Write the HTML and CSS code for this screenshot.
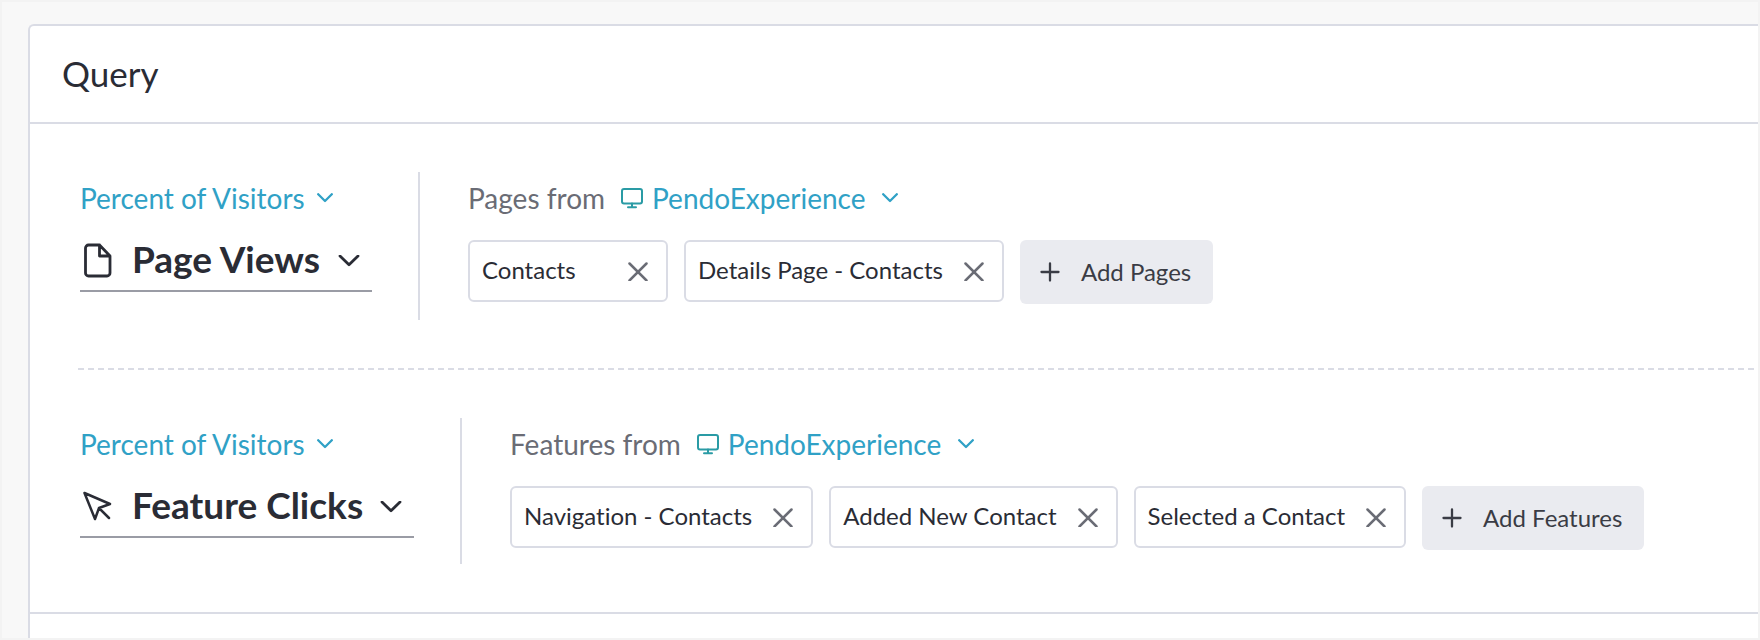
FILE: index.html
```html
<!DOCTYPE html>
<html lang="en">
<head>
<meta charset="utf-8">
<title>Query</title>
<link rel="stylesheet" href="styles.css">
</head>
<body>
<svg class="sprite" aria-hidden="true">
  <symbol id="chevron" viewBox="0 0 16 10"><path stroke-width="2.3" d="M1.200 1.200 8 8 14.800 1.200"/></symbol>
  <symbol id="chevron-lg" viewBox="0 0 22 13"><path stroke-width="2.800" d="M2 1 11 9.800 20 1"/></symbol>
  <symbol id="monitor" viewBox="0 0 22 21"><rect x="1" y="1" width="20" height="14.500" rx="2"/><path d="M11 15.500V19M7 19.300h8"/></symbol>
  <symbol id="page" viewBox="0 0 32 36"><path stroke-width="2.800" d="M19.500 2H8.500a3 3 0 0 0-3 3v25a3 3 0 0 0 3 3h18.500a3 3 0 0 0 3-3V13ZM19.500 2v11h10.500"/></symbol>
  <symbol id="cursor" viewBox="0 0 32 36"><path stroke-width="2.500" d="M4.500 4 30 15 19 19 15 30ZM19 19 29 29"/></symbol>
  <symbol id="close" viewBox="0 0 20 20"><path stroke-width="2.500" d="M1.500 2.500 18.500 19.500M18.500 2.500 1.500 19.500"/></symbol>
  <symbol id="plus" viewBox="0 0 20 20"><path stroke-width="2.300" d="M10 1.500v17M1.500 10h17"/></symbol>
</svg>
<main class="card">
  <header class="card-header"><h1 class="title">Query</h1></header>
  <section class="card-body">
    <div class="row">
      <div class="metric">
        <div class="picker">
          <select class="select select-measure" aria-label="Measure"><option>Percent of Visitors</option></select>
          <svg class="chevron"><use href="#chevron"/></svg>
        </div>
        <div class="event">
          <svg class="event-icon"><use href="#page"/></svg>
          <div class="picker picker-lg">
            <select class="select select-lg" aria-label="Event type"><option>Page Views</option></select>
            <svg class="chevron chevron-lg"><use href="#chevron-lg"/></svg>
          </div>
        </div>
      </div>
      <div class="source">
        <div class="source-line">
          <label for="pages-app">Pages from</label>
          <svg class="monitor"><use href="#monitor"/></svg>
          <div class="picker">
            <select class="select" id="pages-app"><option>PendoExperience</option></select>
            <svg class="chevron"><use href="#chevron"/></svg>
          </div>
        </div>
        <div class="chips">
          <div class="chip"><span class="chip-text">Contacts</span><button class="remove" aria-label="Remove Contacts"><svg class="glyph"><use href="#close"/></svg></button></div>
          <div class="chip"><span class="chip-text">Details Page - Contacts</span><button class="remove" aria-label="Remove Details Page - Contacts"><svg class="glyph"><use href="#close"/></svg></button></div>
          <button class="add"><svg class="glyph"><use href="#plus"/></svg><span class="add-text">Add Pages</span></button>
        </div>
      </div>
    </div>
    <hr class="divider">
    <div class="row">
      <div class="metric">
        <div class="picker">
          <select class="select select-measure" aria-label="Measure"><option>Percent of Visitors</option></select>
          <svg class="chevron"><use href="#chevron"/></svg>
        </div>
        <div class="event">
          <svg class="event-icon"><use href="#cursor"/></svg>
          <div class="picker picker-lg">
            <select class="select select-lg" aria-label="Event type"><option>Feature Clicks</option></select>
            <svg class="chevron chevron-lg"><use href="#chevron-lg"/></svg>
          </div>
        </div>
      </div>
      <div class="source">
        <div class="source-line">
          <label for="features-app">Features from</label>
          <svg class="monitor"><use href="#monitor"/></svg>
          <div class="picker">
            <select class="select" id="features-app"><option>PendoExperience</option></select>
            <svg class="chevron"><use href="#chevron"/></svg>
          </div>
        </div>
        <div class="chips">
          <div class="chip"><span class="chip-text">Navigation - Contacts</span><button class="remove" aria-label="Remove Navigation - Contacts"><svg class="glyph"><use href="#close"/></svg></button></div>
          <div class="chip"><span class="chip-text">Added New Contact</span><button class="remove" aria-label="Remove Added New Contact"><svg class="glyph"><use href="#close"/></svg></button></div>
          <div class="chip"><span class="chip-text">Selected a Contact</span><button class="remove" aria-label="Remove Selected a Contact"><svg class="glyph"><use href="#close"/></svg></button></div>
          <button class="add"><svg class="glyph"><use href="#plus"/></svg><span class="add-text">Add Features</span></button>
        </div>
      </div>
    </div>
  </section>
</main>
</body>
</html>
```
FILE: styles.css
```css
* { box-sizing: border-box; }

body {
  margin: 0;
  min-height: 100vh;
  display: flex;
  border: 2px solid #f3f3f3;
  background: #f8f8f8;
  color: #2a2c35;
  font-family: Lato, sans-serif;
  font-size: 24px;
  font-variant-ligatures: none;
}

button, select {
  font: inherit;
  font-variant-ligatures: none;
}

svg {
  flex: none;
  fill: none;
  stroke: currentColor;
  stroke-width: 2px;
  stroke-linecap: round;
  stroke-linejoin: round;
}

.sprite { display: none; }

.card {
  flex: 1;
  margin: 22px 0 0 26px;
  border: solid #dadce5;
  border-width: 2px 0 0 2px;
  border-top-left-radius: 6px;
  background: #fff;
}

.card-header {
  padding: 25px 32px 27px;
  border-bottom: 2px solid #dadce5;
}

.title {
  margin: 0;
  font-size: 35px;
  font-weight: 400;
  line-height: 44px;
}

.card-body {
  padding: 48px 0 48px 48px;
  border-bottom: 2px solid #dadce5;
}

.row {
  display: flex;
  padding-left: 2px;
}

.metric {
  display: flex;
  flex-direction: column;
  align-items: flex-start;
  gap: 18px;
  padding: 10px 46px 28px 0;
  border-right: 2px solid #dadce5;
}

.row:last-child .metric { padding-bottom: 26px; }

.picker {
  display: grid;
  align-items: center;
  color: #30a1c6;
  font-size: 28px;
}

.picker-lg {
  color: #2a2c35;
  font-size: 37px;
}

.select {
  grid-area: 1 / 1;
  appearance: none;
  height: 32px;
  margin: 0;
  padding: 0 32px 0 0;
  border: 0;
  background: none;
  color: inherit;
  line-height: 32px;
  cursor: pointer;
}

.select-measure { padding-right: 26px; }

.select-lg {
  height: 56px;
  padding: 0 38px 4px 0;
  font-weight: 700;
  line-height: 48px;
}

.chevron {
  grid-area: 1 / 1;
  justify-self: end;
  width: 16px;
  height: 10px;
  pointer-events: none;
}

.chevron-lg {
  width: 22px;
  height: 13px;
}

.event {
  display: flex;
  align-items: center;
  gap: 20px;
  padding-right: 12px;
  border-bottom: 2px solid #9a9ca5;
  height: 60px;
}

.event-icon {
  width: 32px;
  height: 36px;
}

.source {
  flex: 1;
  padding: 10px 0 0 48px;
}

.source-line {
  display: flex;
  align-items: center;
  height: 32px;
  color: #6a6c75;
  font-size: 28px;
  line-height: 32px;
}

.monitor {
  width: 22px;
  height: 21px;
  margin: 0 9px 0 16px;
  color: #2a9ba5;
}

.chips {
  display: flex;
  flex-wrap: wrap;
  align-items: flex-start;
  gap: 16px;
  margin-top: 26px;
}

.chip {
  display: flex;
  align-items: center;
  justify-content: space-between;
  gap: 21px;
  min-width: 200px;
  height: 62px;
  padding: 0 18px 0 12px;
  border: 2px solid #dadce5;
  border-radius: 6px;
}

.chip-text { padding-bottom: 4px; }

.add-text { padding-bottom: 2px; }

.remove {
  display: flex;
  padding: 0;
  border: 0;
  background: none;
  color: #6a6c75;
  cursor: pointer;
}

.glyph {
  width: 20px;
  height: 20px;
}

.add {
  display: flex;
  align-items: center;
  gap: 21px;
  height: 64px;
  padding: 0 22px 0 20px;
  border: 0;
  border-radius: 6px;
  background: #eaebf0;
  color: #3a3c45;
  cursor: pointer;
}

.divider {
  height: 2px;
  margin: 48px 2px 48px 0;
  border: 0;
  background: repeating-linear-gradient(90deg, #dadce5 0 6px, transparent 6px 10px);
}
```
